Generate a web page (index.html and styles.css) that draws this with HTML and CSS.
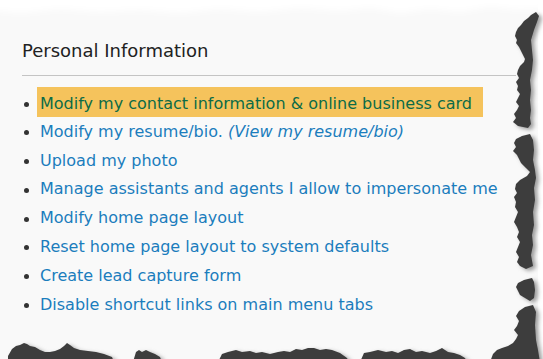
FILE: index.html
```html
<!DOCTYPE html>
<html>
<head>
    <meta charset="UTF-8">
    <title>Personal Information</title>
    <link rel="stylesheet" href="styles.css">
</head>
<body>
    <div class="panel">
        <h2>Personal Information</h2>
        <div class="rule"></div>
        <ul class="links">
            <li class="current"><a href="#">Modify my contact information &amp; online business card</a></li>
            <li><a href="#">Modify my resume/bio.</a> <a class="aside" href="#">(View my resume/bio)</a></li>
            <li><a href="#">Upload my photo</a></li>
            <li><a href="#">Manage assistants and agents I allow to impersonate me</a></li>
            <li><a href="#">Modify home page layout</a></li>
            <li><a href="#">Reset home page layout to system defaults</a></li>
            <li><a href="#">Create lead capture form</a></li>
            <li><a href="#">Disable shortcut links on main menu tabs</a></li>
        </ul>
    </div>

    <!-- torn paper edge, drawn over the page corners -->
    <svg class="tear" width="543" height="359" viewBox="0 0 543 359">
        <defs>
            <filter id="soft" x="-5%" y="-5%" width="110%" height="110%">
                <feGaussianBlur stdDeviation="0.6"/>
            </filter>
            <filter id="glow" x="-10%" y="-10%" width="120%" height="120%">
                <feGaussianBlur stdDeviation="2.2"/>
            </filter>
            <filter id="fade" x="-5%" y="-50%" width="110%" height="200%">
                <feGaussianBlur stdDeviation="3"/>
            </filter>
            <g id="torn">
                <path d="M536 12 L531 15 L528 18 L524 21 L521 25 L518 28 L516 32 L515 36 L517 40 L516 43 L519 47 L521 51 L523 55 L525 59 L524 62 L520 66 L518 70 L517 74 L519 78 L516 82 L518 86 L517 90 L520 94 L518 98 L516 102 L519 106 L517 110 L514 114 L516 118 L513 122 L518 126 L528 128 L531 124 L530 118 L531 110 L530 100 L531 90 L530 80 L532 70 L533 60 L532 50 L531 40 L534 30 L537 22 L539 16 Z"/>
                <path d="M530 134 L522 136 L516 139 L514 143 L516 147 L513 151 L517 155 L519 159 L521 163 L526 168 L530 172 L527 176 L520 180 L516 184 L515 189 L517 193 L514 197 L516 202 L515 207 L518 212 L516 217 L514 222 L517 227 L519 232 L517 237 L520 242 L518 247 L516 252 L519 257 L517 262 L520 266 L526 269 L533 266 L531 255 L533 245 L532 235 L534 225 L533 212 L535 200 L534 188 L536 178 L535 170 L533 160 L534 150 L533 140 Z"/>
                <path d="M532 278 L524 280 L518 283 L516 287 L518 291 L520 295 L525 298 L530 301 L534 298 L535 290 L534 282 Z"/>
                <path d="M533 305 L525 307 L519 311 L516 316 L519 321 L517 326 L514 330 L518 335 L516 339 L513 343 L508 346 L502 348 L497 350 L493 354 L490 362 L540 362 L538 350 L536 340 L535 325 L536 312 Z"/>
                <path d="M8 362 L8 356 L12 349 L16 346 L20 345 L24 343 L27 344 L30 346 L35 347 L40 350 L45 352 L50 352 L55 351 L60 349 L64 346 L67 343 L70 345 L74 348 L80 350 L88 351 L96 352 L104 354 L112 357 L114 362 Z"/>
                <path d="M133 362 L136 352 L139 350 L142 352 L146 350 L150 352 L155 354 L160 357 L162 362 Z"/>
                <path d="M218 362 L222 354 L228 352 L236 350 L242 352 L250 351 L256 353 L262 352 L270 354 L278 352 L284 351 L290 352 L296 349 L302 350 L308 348 L314 348 L320 350 L326 349 L332 350 L340 353 L347 358 L349 362 Z"/>
                <path d="M360 362 L364 353 L370 352 L378 350 L386 352 L392 351 L398 353 L404 350 L410 349 L416 352 L422 351 L430 353 L436 351 L442 348 L448 352 L454 353 L460 355 L465 358 L467 362 Z"/>
            </g>
        </defs>
        <path fill="#fff" filter="url(#fade)" d="M-10 -10 H553 V8 L520 10 L490 7 L460 12 L430 9 L400 13 L370 8 L340 11 L300 8 L260 12 L220 9 L180 13 L140 10 L100 12 L60 9 L20 13 L-10 10 Z"/>
        <rect x="538" y="0" width="5" height="359" fill="#fff"/>
        <use href="#torn" fill="#9a9a9a" filter="url(#glow)" transform="translate(3 2)"/>
        <use href="#torn" fill="#3d3d3d" filter="url(#soft)"/>
    </svg>
</body>
</html>
```

FILE: styles.css
```css
body {
    margin: 0;
    position: relative;
    height: 359px;
    overflow: hidden;
    background-color: #f9f9f9;
    font-family: "DejaVu Sans", Verdana, sans-serif;
}

.panel {
    width: 494px;
    padding: 40px 0 0 22px;
}

h2 {
    margin: 0;
    font-size: 18px;
    line-height: 22px;
    font-weight: normal;
    color: #222;
}

.rule {
    margin-top: 13px;
    border-top: 1px solid #c4c4c4;
}

.links {
    list-style: none;
    margin: 13px 0 0;
    padding: 0;
}

.links li {
    position: relative;
    padding-left: 18px;
    font-size: 16px;
    line-height: 28.8px;
    white-space: nowrap;
}

.links li::before {
    content: "";
    position: absolute;
    left: 2px;
    top: 12.5px;
    width: 5px;
    height: 5px;
    border-radius: 50%;
    background-color: #333;
}

.links a {
    color: #1b7dbd;
    text-decoration: none;
}

.links .aside {
    font-style: italic;
}

.links .current a {
    margin-left: -3px;
    padding: 6.5px 11px 5px 3px;
    background-color: #f5c35c;
    color: #0c6b47;
}

.tear {
    position: absolute;
    top: 0;
    left: 0;
    pointer-events: none;
}
```
